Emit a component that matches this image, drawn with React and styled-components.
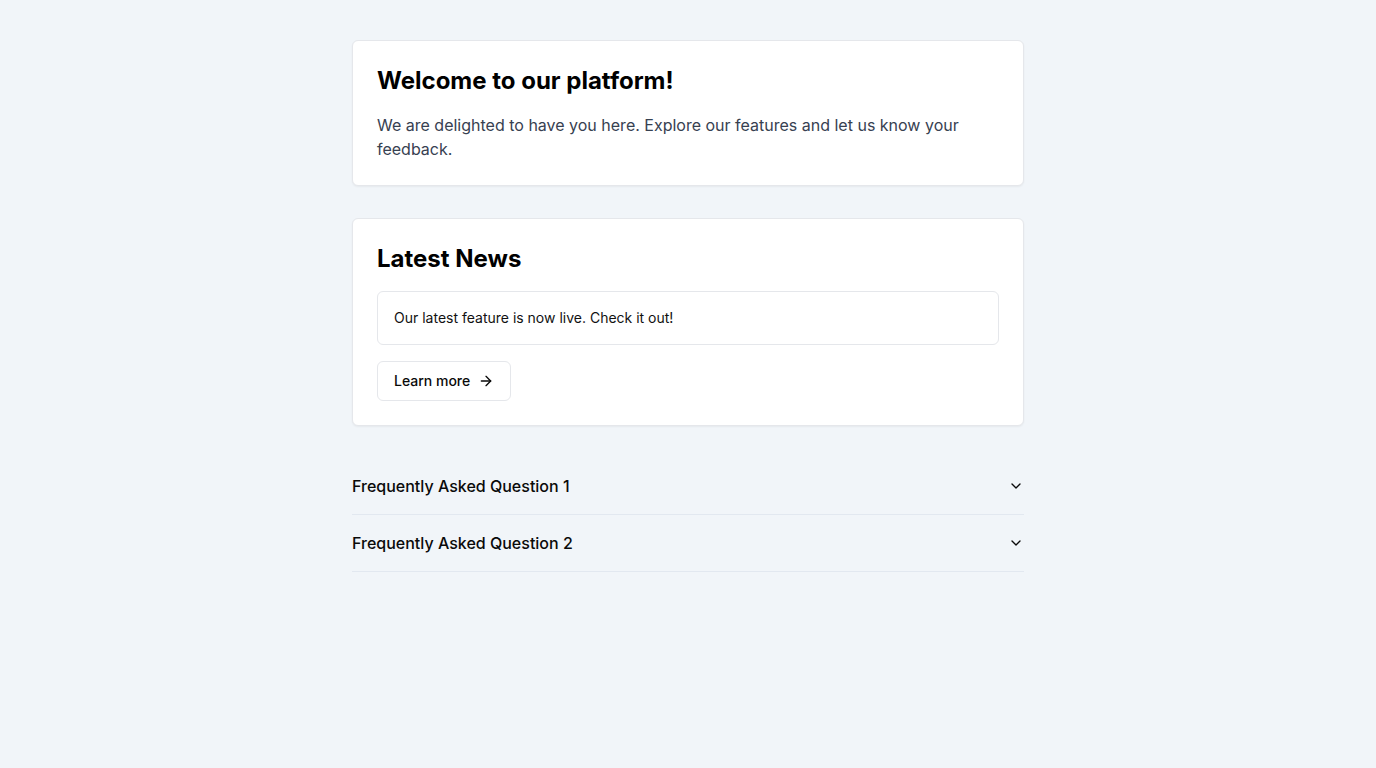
import React from "react";
import styled, { createGlobalStyle } from "styled-components";

const Global = createGlobalStyle`
  html, body { margin: 0; padding: 0; }
  body {
    background: #f1f5f9;
    font-family: Inter, "Noto Sans", sans-serif;
    color: #0a0a0a;
  }
  * { box-sizing: border-box; }
`;

const Page = styled.main`
  min-height: 100vh;
  padding: 40px 16px;
`;

const Column = styled.div`
  max-width: 672px;
  margin: 0 auto;
  display: flex;
  flex-direction: column;
  gap: 32px;
`;

const Card = styled.section`
  background: #ffffff;
  border: 1px solid #e5e7eb;
  border-radius: 6px;
  box-shadow: 0 1px 2px rgba(0, 0, 0, 0.05);
  padding: 24px;
  display: flex;
  flex-direction: column;
  gap: 16px;
`;

const Title = styled.h2`
  margin: 0;
  font-size: 24px;
  line-height: 32px;
  font-weight: 700;
  color: #000;
`;

const Text = styled.p`
  margin: 0;
  font-size: 16px;
  line-height: 24px;
  color: #374151;
`;

const NewsBox = styled.div`
  border: 1px solid #e5e7eb;
  border-radius: 6px;
  padding: 16px;
  font-size: 14px;
  line-height: 20px;
  color: #111;
`;

const Button = styled.button`
  align-self: flex-start;
  display: inline-flex;
  align-items: center;
  gap: 8px;
  height: 40px;
  padding: 0 16px;
  background: #fff;
  border: 1px solid #e5e7eb;
  border-radius: 6px;
  font-family: inherit;
  font-size: 14px;
  line-height: 20px;
  font-weight: 500;
  color: #0a0a0a;
  cursor: pointer;
  padding-bottom: 1px;
`;

const Accordion = styled.div`
  display: flex;
  flex-direction: column;
`;

const Item = styled.div`
  border-bottom: 1px solid #e2e8f0;
`;

const Trigger = styled.button`
  width: 100%;
  display: flex;
  align-items: center;
  justify-content: space-between;
  padding: 16px 0;
  background: transparent;
  border: none;
  font-family: inherit;
  font-size: 16px;
  line-height: 24px;
  font-weight: 500;
  color: #0a0a0a;
  cursor: pointer;
  text-align: left;
`;

const Arrow = () => (
  <svg width="16" height="16" viewBox="0 0 24 24" fill="none" stroke="currentColor" strokeWidth="2" strokeLinecap="round" strokeLinejoin="round">
    <path d="M5 12h14" />
    <path d="m12 5 7 7-7 7" />
  </svg>
);

const Chevron = () => (
  <svg width="16" height="16" viewBox="0 0 24 24" fill="none" stroke="currentColor" strokeWidth="2" strokeLinecap="round" strokeLinejoin="round">
    <path d="m6 9 6 6 6-6" />
  </svg>
);

export default function App() {
  return (
    <>
      <Global />
      <Page>
        <Column>
          <Card>
            <Title>Welcome to our platform!</Title>
            <Text>
              We are delighted to have you here. Explore our features and let us know your feedback.
            </Text>
          </Card>
          <Card>
            <Title>Latest News</Title>
            <NewsBox>Our latest feature is now live. Check it out!</NewsBox>
            <Button>
              Learn more <Arrow />
            </Button>
          </Card>
          <Accordion>
            {["Frequently Asked Question 1", "Frequently Asked Question 2"].map((q) => (
              <Item key={q}>
                <Trigger>
                  {q}
                  <Chevron />
                </Trigger>
              </Item>
            ))}
          </Accordion>
        </Column>
      </Page>
    </>
  );
}
